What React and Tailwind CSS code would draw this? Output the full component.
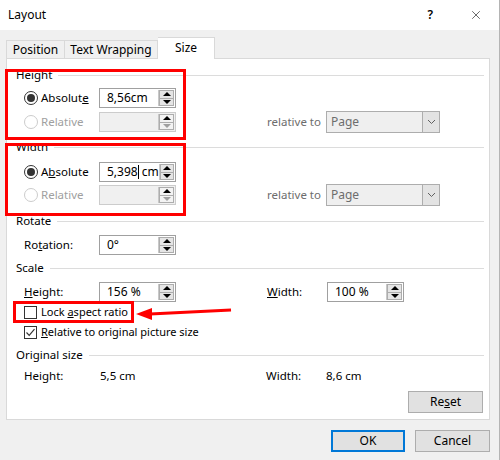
import { X } from 'lucide-react';

const Spin = ({ disabled }) => (
  <div className="w-[16px] h-full flex flex-col border-l border-[#c8c8c8]">
    <div className={`flex-1 flex items-center justify-center border border-[#adadad] ${disabled ? 'bg-[#f3f3f3]' : 'bg-[#e5e5e5]'}`}>
      <div className="w-0 h-0 border-l-[4px] border-r-[4px] border-b-[4px] border-l-transparent border-r-transparent border-b-black" />
    </div>
    <div className={`flex-1 flex items-center justify-center border border-t-0 border-[#adadad] ${disabled ? 'bg-[#f3f3f3]' : 'bg-[#e5e5e5]'}`}>
      <div className={`w-0 h-0 border-l-[4px] border-r-[4px] border-t-[4px] border-l-transparent border-r-transparent ${disabled ? 'border-t-[#a0a0a0]' : 'border-t-black'}`} />
    </div>
  </div>
);

const Field = ({ value, disabled, caret, w = 'w-[77px]' }) => (
  <div className={`${w} h-[20px] flex items-stretch border ${disabled ? 'border-[#cccccc] bg-[#f0f0f0]' : 'border-[#a0a0a0] bg-white'} p-px`}>
    <div className="flex-1 flex items-center pl-[6px] leading-none text-[12px]">
      {caret ? (
        <>
          <span>5,398</span>
          <span className="inline-block w-px h-[14px] bg-black" />
          <span className="ml-[3px]">cm</span>
        </>
      ) : value}
    </div>
    <Spin disabled={disabled} />
  </div>
);

const Radio = ({ checked, disabled }) => (
  <div className={`w-[14px] h-[14px] rounded-full border flex items-center justify-center bg-white ${disabled ? 'border-[#cccccc]' : 'border-[#333333]'}`}>
    {checked && <div className="w-[8px] h-[8px] rounded-full bg-[#333333]" />}
  </div>
);

const Check = ({ checked }) => (
  <div className="w-[13px] h-[13px] border border-[#333333] bg-white flex items-center justify-center">
    {checked && (
      <svg width="11" height="11" viewBox="0 0 11 11">
        <path d="M1.5 5.5 L4.2 8.3 L9.5 2.2" fill="none" stroke="#333333" strokeWidth="1.2" />
      </svg>
    )}
  </div>
);

const Header = ({ children, h }) => (
  <div className={`flex items-center ${h} pl-[9px] pr-[5px]`}>
    <span>{children}</span>
    <div className="flex-1 h-px bg-[#dcdcdc] ml-[6px]" />
  </div>
);

const Select = () => (
  <div className="w-[114px] h-[22px] flex border border-[#adadad] bg-[#efefef]">
    <div className="flex-1 flex items-center pl-[4px] text-[#6d6d6d] text-[12px]">Page</div>
    <div className="w-[17px] flex items-center justify-center border-l border-[#adadad] bg-[#e3e3e3]">
      <svg width="9" height="6" viewBox="0 0 9 6">
        <path d="M1 1 L4.5 4.5 L8 1" fill="none" stroke="#606060" strokeWidth="1" />
      </svg>
    </div>
  </div>
);

const SizeRow = ({ h, absLabel, value, caret }) => (
  <div className={`flex items-center ${h} pl-[17px]`}>
    <div className="w-[75px] flex items-center gap-[3px]">
      <Radio checked />
      <span>{absLabel}</span>
    </div>
    <Field value={value} caret={caret} />
  </div>
);

const RelRow = ({ h }) => (
  <div className={`flex items-center ${h} pl-[17px]`}>
    <div className="w-[75px] flex items-center gap-[3px]">
      <Radio disabled />
      <span className="text-[#a0a0a0]">Relative</span>
    </div>
    <Field value="" disabled />
    <span className="ml-[91px] w-[59px] text-[#6d6d6d]">relative to</span>
    <Select />
  </div>
);

export default function App() {
  return (
    <div className="w-[500px] h-[460px] bg-[#f0f0f0] text-[11.5px] text-black overflow-hidden border-r border-[#b4b4b4]" style={{ fontFamily: '"Noto Sans", "Open Sans", sans-serif' }}>
      <div className="h-[30px] bg-white flex items-center pl-[8px]">
        <span className="text-[12px]">Layout</span>
        <span className="ml-auto mr-[36px] font-semibold text-[12px]">?</span>
        <X size={14} strokeWidth={1} className="mr-[16px]" />
      </div>

      <div className="pt-[7px]">
        <div className="flex h-[21px] pl-[6px] text-[12px]">
          <div className="self-end h-[18px] w-[59px] border border-b-0 border-[#d9d9d9] flex items-center justify-center">Position</div>
          <div className="self-end h-[18px] w-[93px] border border-b-0 border-l-0 border-[#d9d9d9] flex items-center justify-center">Text Wrapping</div>
          <div className="relative z-10 self-start h-[22px] w-[57px] border border-b-0 border-l-0 border-[#d9d9d9] bg-white flex items-center justify-center pb-[1px]">Size</div>
        </div>

        <div className="relative ml-[6px] w-[484px] h-[362px] bg-white border border-[#d9d9d9] pt-[6px]">
          <Header h="h-[20px]">Height</Header>
          <SizeRow h="h-[26px]" absLabel={<>Absolut<u>e</u></>} value="8,56cm" />
          <RelRow h="h-[22px]" />

          <Header h="h-[28px]">Width</Header>
          <SizeRow h="h-[22px]" absLabel={<>A<u>b</u>solute</>} caret />
          <RelRow h="h-[24px]" />

          <Header h="h-[28px]">Rotate</Header>
          <div className="flex items-center h-[20px] pl-[17px]">
            <span className="w-[75px]">Ro<u>t</u>ation:</span>
            <Field value="0°" />
          </div>

          <Header h="h-[26px]">Scale</Header>
          <div className="flex items-center h-[22px] pl-[17px]">
            <span className="w-[75px]"><u>H</u>eight:</span>
            <Field value="156 %" />
            <span className="ml-[91px] w-[60px]"><u>W</u>idth:</span>
            <Field value="100 %" />
          </div>
          <div className="flex items-center h-[18px] pl-[17px] gap-[4px] text-[11px]">
            <Check />
            <span>Lock <u>a</u>spect ratio</span>
          </div>
          <div className="flex items-center h-[22px] pl-[17px] gap-[4px] text-[11px]">
            <Check checked />
            <span><u>R</u>elative to original picture size</span>
          </div>

          <Header h="h-[24px]">Original size</Header>
          <div className="flex items-center h-[18px] pl-[17px]">
            <span className="w-[76px]">Height:</span>
            <span className="w-[166px]">5,5 cm</span>
            <span className="w-[60px]">Width:</span>
            <span>8,6 cm</span>
          </div>
          <div className="flex justify-end pr-[6px] mt-[6px]">
            <button className="w-[75px] h-[22px] bg-[#e1e1e1] border border-[#adadad] text-[12px]">Re<u>s</u>et</button>
          </div>

          <div className="absolute left-[-2px] top-[10px] w-[181px] h-[71px] border-[3px] border-[#ff0000] pointer-events-none" />
          <div className="absolute left-[-2px] top-[84px] w-[181px] h-[73px] border-[3px] border-[#ff0000] pointer-events-none" />
          <div className="absolute left-[6px] top-[242px] w-[121px] h-[22px] border-[3px] border-[#ff0000] pointer-events-none" />
          <svg className="absolute left-[125px] top-[244px] pointer-events-none" width="105" height="22" viewBox="0 0 105 22">
            <polygon points="4,11 20,5 20,17" fill="#ff0000" />
            <line x1="18" y1="11" x2="99" y2="7" stroke="#ff0000" strokeWidth="3" />
          </svg>
        </div>
      </div>

      <div className="flex justify-end gap-[10px] pr-[9px] mt-[10px] text-[12px]">
        <button className="w-[74px] h-[22px] bg-[#e1e1e1] border-2 border-[#0078d7]">OK</button>
        <button className="w-[75px] h-[22px] bg-[#e1e1e1] border border-[#adadad]">Cancel</button>
      </div>
    </div>
  );
}
